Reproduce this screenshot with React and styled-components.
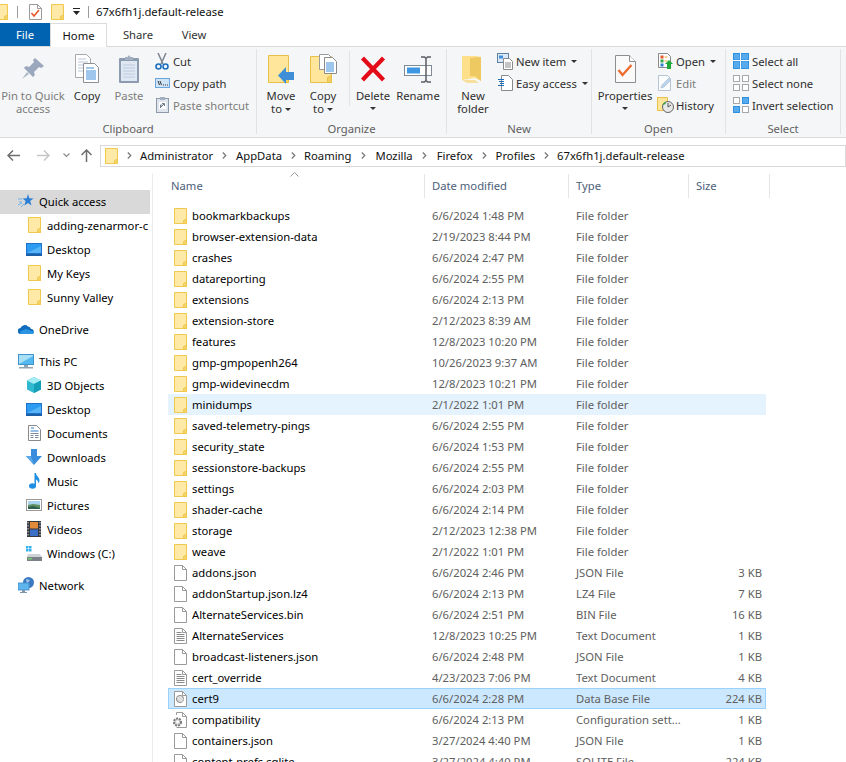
import React from "react";
import styled, { createGlobalStyle } from "styled-components";

const Global = createGlobalStyle`
  html, body { margin: 0; padding: 0; height: 100%; background: #fff; overflow: hidden; }
  body { font-family: "Noto Sans", "Open Sans", sans-serif; font-size: 11.25px; color: #1a1a1a; }
  * { box-sizing: border-box; }
  svg { display: block; flex: none; }
`;

const Page = styled.div`
  width: 846px; height: 762px; display: flex; flex-direction: column; overflow: hidden; background: #fff;
`;

/* ---------- title bar ---------- */
const TitleBar = styled.div`
  height: 23px; display: flex; align-items: center; flex: none; overflow: hidden;
`;
const TitleSep = styled.span`
  width: 1px; height: 12px; background: #9a9a9a; flex: none; margin: ${p => p.$m};
`;
const TitleText = styled.span`
  color: #111; margin-left: 7px; white-space: nowrap;
`;
const Clip = styled.span`
  display: block; flex: none; margin: ${p => p.$m || 0};
`;

/* ---------- tabs ---------- */
const TabBar = styled.div`
  height: 24px; flex: none; display: flex; border-bottom: 1px solid #dadbdc;
`;
const FileTab = styled.div`
  width: 50px; height: 23px; background: #0063b1; color: #fff; display: flex; align-items: center; justify-content: center;
`;
const Tab = styled.div`
  width: ${p => p.$w}px; height: ${p => (p.$active ? 24 : 23)}px; display: flex; align-items: center; justify-content: center;
  padding-bottom: 1px; color: ${p => (p.$active ? "#111" : "#333")};
  background: #fff; position: relative; z-index: 1;
  ${p => p.$active && "border: 1px solid #dadbdc; border-bottom: 0;"}
`;

/* ---------- ribbon ---------- */
const Ribbon = styled.div`
  height: 91px; flex: none; display: flex; background: #f5f6f7; border-bottom: 1px solid #dadbdc; padding-top: 2px;
`;
const Group = styled.div`
  width: ${p => p.$w}px; flex: none; height: 85px; display: flex; flex-direction: column;
  border-right: 1px solid #e2e3e4;
`;
const GroupBody = styled.div`
  flex: 1; display: flex; padding-left: ${p => p.$pl || 0}px; min-height: 0;
`;
const GroupLabel = styled.div`
  height: 15px; margin-bottom: -3px; line-height: 13px; text-align: center; color: #5f5f5f; flex: none;
`;
const Large = styled.div`
  width: ${p => p.$w}px; flex: none; display: flex; flex-direction: column; align-items: center; white-space: nowrap;
  color: ${p => (p.$off ? "#7c7c7c" : "#2f2f2f")};
`;
const LargeIcon = styled.div`
  height: 40px; display: flex; align-items: center; justify-content: center;
`;
const LargeText = styled.div`
  line-height: 13px; text-align: center;
`;
const Caret = styled.span`
  display: ${p => (p.$inline ? "inline-block" : "block")}; width: 0; height: 0;
  border-left: 3px solid transparent; border-right: 3px solid transparent; border-top: 3px solid #333;
  margin: ${p => p.$m || "5px auto 0"}; vertical-align: middle;
`;
const InnerSep = styled.div`
  width: 1px; height: 55px; background: #e2e3e4; flex: none; margin: 2px 0 0 5px;
`;
const Stack = styled.div`
  display: flex; flex-direction: column; padding-top: 1px; margin-left: ${p => p.$ml || 0}px;
`;
const Small = styled.div`
  height: 22px; display: flex; align-items: center; gap: 3px; white-space: nowrap;
  color: ${p => (p.$off ? "#7c7c7c" : "#2f2f2f")};
`;
const SmallIcon = styled.span`
  width: 16px; display: flex; justify-content: center; flex: none;
`;

/* ---------- address row ---------- */
const NavRow = styled.div`
  height: 34px; flex: none; display: flex; align-items: center; padding: 1px 0 0 7px;
`;
const NavButtons = styled.div`
  width: 93px; flex: none; display: flex; align-items: center;
`;
const AddressBox = styled.div`
  flex: 1; height: 22px; border: 1px solid #d9d9d9; display: flex; align-items: center; padding-left: 4px; color: #111; white-space: nowrap;
`;
const Crumb = styled.span`
  display: flex; align-items: center;
`;
const CrumbChevron = styled.span`
  width: ${p => p.$w}px; display: flex; justify-content: center; flex: none;
`;

/* ---------- main ---------- */
const Main = styled.div`
  flex: 1; min-height: 0; display: flex; overflow: hidden;
`;
const Sidebar = styled.nav`
  width: 153px; flex: none; border-right: 1px solid #ececec; padding-top: 17px; margin-top: 1px;
`;
const NavItem = styled.div`
  width: 150px; height: 24px; display: flex; align-items: center; white-space: nowrap; overflow: hidden;
  padding: 0 0 2px ${p => (p.$top ? 18 : 26)}px; margin-top: ${p => p.$gap || 0}px; color: #000;
  background: ${p => (p.$active ? "#d9d9d9" : "transparent")};
`;
const NavIcon = styled.span`
  width: 16px; flex: none; display: flex; justify-content: center; margin-right: 5px;
`;

const Content = styled.section`
  flex: 1; min-width: 0; padding-left: 15px; display: flex; flex-direction: column;
`;
const Columns = `display: grid; grid-template-columns: 257px 144px 120px 77px; width: 598px;`;
const Header = styled.div`
  ${Columns} height: 24px; flex: none; align-items: stretch; color: #4c607a; position: relative; margin-top: 2px; width: 602px; grid-template-columns: 257px 144px 120px 81px;
`;
const HeadCell = styled.div`
  padding: 0 0 1px ${p => p.$first ? 3 : 7}px; display: flex; align-items: center; border-right: 1px solid #e5e5e5;
`;
const SortArrow = styled.svg`
  position: absolute; left: 122px; top: -2px;
`;
const Rows = styled.div`
  margin-top: 7px;
`;
const Row = styled.div`
  ${Columns} height: 21px; align-items: center; white-space: nowrap;
  ${p => p.$selected && "background: #cce8ff; box-shadow: inset 0 0 0 1px #99d1ff;"}
  ${p => p.$hover && "background: #e5f3ff;"}
`;
const NameCell = styled.div`
  display: flex; align-items: center; color: #000; padding-left: ${p => p.$pl ?? 6}px; gap: 5px;
`;
const MetaCell = styled.div`
  padding-left: 7px; color: #606060; overflow: hidden;
`;
const SizeCell = styled.div`
  padding-right: 4px; color: #606060; text-align: right;
`;

/* ---------- icons ---------- */
const Folder = () => (
  <svg width="13" height="16" viewBox="0 0 13 16">
    <path d="M.5.5h12v15H.5z" fill="#ffe9a6" stroke="#eec84f" />
    <path d="M9.500 15.500v-3l3-1.500v4.500z" fill="#f6d365" stroke="#eec84f" />
  </svg>
);
const Page16 = ({ children }) => (
  <svg width="13" height="16" viewBox="0 0 13 16">
    <path d="M.5.5h8l4 4v11H.5z" fill="#fff" stroke="#9a9a9a" />
    <path d="M8.500.5v4h4" fill="none" stroke="#9a9a9a" />
    {children}
  </svg>
);
const TextPage = () => (
  <Page16>
    <path d="M2.500 4.500h5M2.500 6.500h8M2.500 8.500h8M2.500 10.500h8M2.500 12.500h8" stroke="#8a8a8a" />
  </Page16>
);
const DbPage = () => (
  <Page16>
    <circle cx="6" cy="8" r="3.600" fill="#d8d8d8" stroke="#8d8d8d" />
    <path d="M3.500 6l5 5M5.500 4.800l4 4" stroke="#f4f4f4" />
  </Page16>
);
const ConfigPage = () => (
  <svg width="15" height="16" viewBox="0 0 15 16">
    <path d="M4.500 3V.5h6l4 4v11h-10" fill="#fff" stroke="#9a9a9a" />
    <path d="M10.500.5v4h4" fill="none" stroke="#9a9a9a" />
    <circle cx="5.500" cy="10" r="3.600" fill="#cfcfcf" stroke="#7d7d7d" strokeDasharray="2 1" strokeWidth="2" />
    <circle cx="5.500" cy="10" r="1.400" fill="#fff" />
  </svg>
);

const Pin = () => (
  <svg width="24" height="24" viewBox="0 0 24 24">
    <path d="M14 1l9 8-3 2-2-1-5 5c1 2 1 4-1 5L3 11c1-2 3-2 5-1l5-5-1-2z" fill="#9aa7bd" />
    <path d="M6 15l-5 7 7-5z" fill="#aeb8c9" />
  </svg>
);
const CopyBig = () => (
  <svg width="26" height="30" viewBox="0 0 26 30">
    <path d="M1.500.5h11l4 4v19h-15z" fill="#fff" stroke="#a9a9a9" />
    <path d="M4 5h8M4 8h10M4 11h10M4 14h10M4 17h10" stroke="#b9c7da" />
    <path d="M9.500 9.500h11l4 4v15h-15z" fill="#fff" stroke="#8f8f8f" />
    <path d="M12 14h8M12 17h10M12 19h10M12 21h10M12 23h10M12 25h10" stroke="#3f8fdc" />
  </svg>
);
const PasteBig = () => (
  <svg width="22" height="29" viewBox="0 0 22 29">
    <rect x="1" y="3" width="20" height="25" rx="1" fill="#8c9bb0" />
    <rect x="3" y="6" width="16" height="20" fill="#dfe7f3" />
    <path d="M5 10h12M5 13h12M5 16h12M5 19h12M5 22h12" stroke="#bccadf" />
    <path d="M7 5V2h2.500l1-1.500h1l1 1.500H15v3z" fill="#a3aebe" />
  </svg>
);
const Scissors = () => (
  <svg width="14" height="17" viewBox="0 0 14 17">
    <path d="M3 0l5 11M11 0L6 11" stroke="#7c8490" strokeWidth="1.500" />
    <circle cx="3.500" cy="13.500" r="2.500" fill="none" stroke="#1c6fc0" strokeWidth="1.600" />
    <circle cx="10.500" cy="13.500" r="2.500" fill="none" stroke="#1c6fc0" strokeWidth="1.600" />
  </svg>
);
const CopyPath = () => (
  <svg width="15" height="10" viewBox="0 0 15 10">
    <rect x=".5" y=".5" width="14" height="9" fill="#cfe3f7" stroke="#6ba6dc" />
    <path d="M3 3l1.500 4M5 3l1.500 4" stroke="#333" />
    <path d="M8 7h1M10 7h1M12 7h1" stroke="#333" />
  </svg>
);
const PasteShort = () => (
  <svg width="13" height="16" viewBox="0 0 13 16">
    <rect x=".5" y="1.500" width="12" height="14" fill="#dfe5ec" stroke="#8d99a8" />
    <rect x="4" y="0" width="5" height="3" fill="#a3aebe" />
    <rect x="3" y="5" width="7" height="7" fill="#fff" />
    <path d="M4.500 11V8h2M5 10l3-3M6 6.500h2.500V9" stroke="#6d7a8a" fill="none" />
  </svg>
);
const MoveTo = () => (
  <svg width="26" height="29" viewBox="0 0 26 29">
    <path d="M.5.500h20v27H.5z" fill="#ffe69a" stroke="#e6c049" />
    <path d="M16.500 27.500v-5l4-2v7z" fill="#f4cf62" stroke="#e6c049" />
    <path d="M10 20.500L18 12v5h8v8h-8v4z" fill="#3f8fd8" />
  </svg>
);
const CopyTo = () => (
  <svg width="27" height="30" viewBox="0 0 27 30">
    <path d="M.5 2.500h21v26H.5z" fill="#ffe69a" stroke="#e6c049" />
    <path d="M17.500 28.500v-5l4-2v7z" fill="#f4cf62" stroke="#e6c049" />
    <path d="M9.500.5h9l3 3v12h-12z" fill="#fff" stroke="#9a9a9a" />
    <path d="M14.500 3.500h8l4 4v12h-12z" fill="#fff" stroke="#8a8a8a" />
    <path d="M16 9h8M16 11h8M16 13h8M16 15h8M16 17h8" stroke="#3f8fdc" />
  </svg>
);
const Cross = () => (
  <svg width="26" height="26" viewBox="0 0 26 26">
    <path d="M2.500 2L23.500 24M23.500 2L2.500 24" fill="none" stroke="#e30b17" strokeWidth="4.200" />
  </svg>
);
const Rename = () => (
  <svg width="28" height="27" viewBox="0 0 28 27">
    <rect x=".5" y="9.500" width="27" height="10" fill="#fff" stroke="#7f8a96" />
    <rect x="3" y="11.500" width="13" height="6" fill="#3f96e3" />
    <path d="M17 1h3.500L22 2.500 23.500 1H27M22 2.500v22M17 26h3.500l1.500-1.500 1.500 1.500H27" stroke="#5a5f66" strokeWidth="1.500" fill="none" />
  </svg>
);
const NewFolderBig = () => (
  <svg width="24" height="28" viewBox="0 0 24 28">
    <path d="M1 1h14l5 1v24l-6-3-13 2z" fill="#ffe08a" />
    <path d="M9 3l11-1v24l-6-5H9z" fill="#eec860" />
    <path d="M1 25L9 3v18z" fill="#ffe08a" opacity=".7" />
    <path d="M1 25h13l4 3H6z" fill="#f8d676" opacity=".7" />
  </svg>
);
const NewItem = () => (
  <svg width="17" height="17" viewBox="0 0 17 17">
    <rect x=".5" y=".5" width="11" height="9" fill="#dbe9f7" stroke="#5f7f9f" />
    <rect x="2" y="2.500" width="4" height="3" fill="#3f8fdc" />
    <path d="M6.500 5.500h6l3 3v8h-9z" fill="#fff" stroke="#8a8a8a" />
    <path d="M8 10h6M8 12h6M8 14h6" stroke="#8a8a8a" />
  </svg>
);
const EasyAccess = () => (
  <svg width="15" height="16" viewBox="0 0 15 16">
    <path d="M3.500.5h7l4 4v11h-11z" fill="#fff" stroke="#8a8a8a" />
    <path d="M0 6.500h6M1 8.500h5M2 10.500h4M0 12.500h6" stroke="#1d6fbe" transform="translate(0 -2)" />
  </svg>
);
const PropsBig = () => (
  <svg width="21" height="28" viewBox="0 0 21 28">
    <path d="M.5.500h14l6 6v21H.5z" fill="#fafafa" stroke="#8e8e8e" />
    <path d="M14.500.500v6h6" fill="#fff" stroke="#8e8e8e" />
    <path d="M3.500 15l4 5 9-10" fill="none" stroke="#ee6a2c" strokeWidth="2.300" />
  </svg>
);
const OpenIcon = () => (
  <svg width="15" height="16" viewBox="0 0 15 16">
    <path d="M.5.500h9l3 3v11H.5z" fill="#fff" stroke="#8a8a8a" />
    <rect x="2.500" y="2.500" width="3" height="3" fill="#e8552d" />
    <rect x="2.500" y="6.500" width="3" height="3" fill="#35a84a" />
    <rect x="2.500" y="10.500" width="3" height="3" fill="#2f7fd0" />
    <path d="M6.500 4h3M6.500 8h3" stroke="#f2a23a" />
    <path d="M11 7l4 4h-2v5h-4v-5H7z" fill="#20a93a" />
  </svg>
);
const EditIcon = () => (
  <svg width="14" height="16" viewBox="0 0 14 16">
    <path d="M.5.500h9l3 3v12H.5z" fill="#fbfcfe" stroke="#b8c4d4" />
    <path d="M3 13l1-3 7-7 2 2-7 7z" fill="#bcd4ee" stroke="#9fb6d0" strokeWidth=".6" />
  </svg>
);
const HistoryIcon = () => (
  <svg width="17" height="16" viewBox="0 0 17 16">
    <path d="M.5.500h10v13H.5z" fill="#ffe69a" stroke="#e6c049" />
    <circle cx="11" cy="10" r="5.500" fill="#e8e8e8" stroke="#666" />
    <path d="M11 6v4l3-2" fill="none" stroke="#555" />
    <path d="M5 11a6 6 0 0 1 3-6l1 2-4 1z" fill="#3aa646" />
  </svg>
);
const Squares = ({ fills, stroke }) => {
  const spots = [[0, 0], [9, 0], [0, 9], [9, 9]];
  return (
    <svg width="16" height="16" viewBox="0 0 16 16">
      {spots.map(([x, y], i) => (
        <rect key={i} x={x + 0.5} y={y + 0.5} width="6" height="6" fill={fills[i]} stroke={stroke[i]} />
      ))}
    </svg>
  );
};
const SelectAll = () => (
  <svg width="16" height="16" viewBox="0 0 16 16">
    <rect width="16" height="16" fill="#2f8fe0" />
    <path d="M7.500 0v16M0 7.500h16" stroke="#fff" />
    <rect x="1" y="1" width="5.500" height="5.500" fill="#57aaec" />
    <rect x="8.500" y="1" width="6.500" height="5.500" fill="#57aaec" />
    <rect x="1" y="8.500" width="5.500" height="6.500" fill="#57aaec" />
    <rect x="8.500" y="8.500" width="6.500" height="6.500" fill="#57aaec" />
  </svg>
);

const Back = styled.svg`
  ${p => p.$flip && "transform: scaleX(-1);"}
`;
const BackArrow = ({ color = "#6e6e6e", flip }) => (
  <Back $flip={flip} width="13" height="11" viewBox="0 0 13 11">
    <path d="M6 .5L1 5.500l5 5M1 5.500h12" fill="none" stroke={color} strokeWidth="1.500" />
  </Back>
);
const Up = () => (
  <svg width="11" height="13" viewBox="0 0 11 13">
    <path d="M.5 6l5-5 5 5M5.500 1v12" fill="none" stroke="#6e6e6e" strokeWidth="1.500" />
  </svg>
);
const Chev = () => (
  <svg width="7" height="5" viewBox="0 0 7 5">
    <path d="M.5.500l3 3 3-3" fill="none" stroke="#8a8a8a" strokeWidth="1.200" />
  </svg>
);
const ChevR = () => (
  <svg width="5" height="7" viewBox="0 0 5 7">
    <path d="M.8.500l3 3-3 3" fill="none" stroke="#777" strokeWidth="1.200" />
  </svg>
);

const Star = () => (
  <svg width="16" height="16" viewBox="0 0 16 16">
    <path d="M10 1l1.300 4.200 4.300.2-3.400 2.700 1.200 4.300L10 10l-3.700 2.400 1.300-4.300L4.500 5.400l4.200-.2z" fill="#2b7fd4" />
    <path d="M0 6h4M1 9h3M0 12l4-2M3 14l3-3" stroke="#6fb2ea" />
  </svg>
);
const DesktopIco = () => (
  <svg width="16" height="13" viewBox="0 0 16 13">
    <rect width="16" height="12" fill="#1f72c9" />
    <rect x="1" y="1" width="14" height="9" fill="#2d9bf0" />
    <path d="M1 10L15 3v7z" fill="#56b4f7" />
    <rect x="0" y="11" width="16" height="2" fill="#1a5fa8" />
  </svg>
);
const Cloud = () => (
  <svg width="16" height="10" viewBox="0 0 16 10">
    <path d="M3 10a3 3 0 0 1-.5-6A4.500 4.500 0 0 1 10 2.500 3.500 3.500 0 0 1 13 5a2.500 2.500 0 0 1 .5 5z" fill="#0f6cbd" />
    <path d="M3 10a2 2 0 0 1 0-3l5-2 8 3a2 2 0 0 1-2.500 2z" fill="#2b95e4" />
  </svg>
);
const PC = () => (
  <svg width="16" height="15" viewBox="0 0 16 15">
    <rect x=".5" y=".5" width="15" height="10" fill="#a9e0f8" stroke="#3d93cc" />
    <path d="M1 10L15 2v8z" fill="#53b9ee" />
    <rect x="6" y="11" width="4" height="2" fill="#8fa6b5" />
    <rect x="1" y="13" width="14" height="1.500" fill="#8fa6b5" />
  </svg>
);
const Cube = () => (
  <svg width="16" height="16" viewBox="0 0 16 16">
    <path d="M8 0l7 3.500v9L8 16l-7-3.500v-9z" fill="#2fb8cf" />
    <path d="M8 0l7 3.500L8 7 1 3.500z" fill="#a5edf5" />
    <path d="M8 7v9l7-3.500v-9z" fill="#149eb8" />
  </svg>
);
const DocsIco = () => (
  <svg width="13" height="16" viewBox="0 0 13 16">
    <path d="M.5.500h8l4 4v11H.5z" fill="#fff" stroke="#8a8a8a" />
    <path d="M3 3h3M2.500 6h8" stroke="#2f7fd0" />
    <path d="M2.500 8.500h8M2.500 10.500h3M7 10.500h3.500M2.500 12.500h3M7 12.500h3.500" stroke="#7d8b99" />
  </svg>
);
const DownIco = () => (
  <svg width="16" height="16" viewBox="0 0 16 16">
    <path d="M5 0h6v7h5l-8 9-8-9h5z" fill="#3a8ddc" />
    <path d="M8 16L0 7h5z" fill="#5aa7ea" />
  </svg>
);
const MusicIco = () => (
  <svg width="11" height="16" viewBox="0 0 11 16">
    <ellipse cx="3.500" cy="13" rx="3.500" ry="2.800" fill="#1e8fe3" />
    <path d="M5.500 13V0h1.500c0 3 3.500 4 3.500 7.500 0 1-.3 2-1 3 .2-2-1.500-3.500-2.500-4V13z" fill="#1e8fe3" />
  </svg>
);
const PicIco = () => (
  <svg width="16" height="12" viewBox="0 0 16 12">
    <rect x=".5" y=".5" width="15" height="11" fill="#fff" stroke="#9a9a9a" />
    <rect x="2" y="2" width="12" height="4" fill="#a9d3ef" />
    <path d="M2 6l5-1 7 1v4H2z" fill="#5f8f5f" />
    <path d="M2 8l5-1 7 2v1H2z" fill="#2f5f4f" />
  </svg>
);
const FilmIco = () => (
  <svg width="14" height="16" viewBox="0 0 14 16">
    <rect width="14" height="16" fill="#35393f" />
    <rect x="3" y="1" width="8" height="6.500" fill="#e08a3a" />
    <rect x="3" y="8.500" width="8" height="6.500" fill="#3a6fc8" />
    <path d="M1 1v14M13 1v14" stroke="#cfd3d8" strokeDasharray="1.500 1.500" />
  </svg>
);
const DriveIco = () => (
  <svg width="16" height="15" viewBox="0 0 16 15">
    <rect x="0" y="0" width="2.500" height="2.500" fill="#35b0f0" />
    <rect x="3" y="0" width="2.500" height="2.500" fill="#35b0f0" />
    <rect x="0" y="3" width="2.500" height="2.500" fill="#35b0f0" />
    <rect x="3" y="3" width="2.500" height="2.500" fill="#35b0f0" />
    <path d="M2 8h12l2 3H1z" fill="#cfd3d6" />
    <rect x="1" y="11" width="15" height="4" fill="#7b8186" />
    <rect x="2" y="12" width="4" height="1.500" fill="#6fd06f" />
  </svg>
);
const NetIco = () => (
  <svg width="16" height="16" viewBox="0 0 16 16">
    <circle cx="10.500" cy="5.500" r="5.500" fill="#3b79c2" />
    <path d="M8 2l4 1-2 3 2 3-3-1z" fill="#9ac4ea" />
    <rect x="0" y="6" width="11" height="7" fill="#5fb6ee" stroke="#3c87c4" strokeWidth=".8" />
    <rect x="4" y="13" width="3" height="2" fill="#7f97a8" />
    <rect x="2" y="15" width="7" height="1" fill="#7f97a8" />
  </svg>
);

/* ---------- data ---------- */
const FF = "File folder";
const rows = [
  ["bookmarkbackups", "6/6/2024 1:48 PM", FF, ""],
  ["browser-extension-data", "2/19/2023 8:44 PM", FF, ""],
  ["crashes", "6/6/2024 2:47 PM", FF, ""],
  ["datareporting", "6/6/2024 2:55 PM", FF, ""],
  ["extensions", "6/6/2024 2:13 PM", FF, ""],
  ["extension-store", "2/12/2023 8:39 AM", FF, ""],
  ["features", "12/8/2023 10:20 PM", FF, ""],
  ["gmp-gmpopenh264", "10/26/2023 9:37 AM", FF, ""],
  ["gmp-widevinecdm", "12/8/2023 10:21 PM", FF, ""],
  ["minidumps", "2/1/2022 1:01 PM", FF, "", "hover"],
  ["saved-telemetry-pings", "6/6/2024 2:55 PM", FF, ""],
  ["security_state", "6/6/2024 1:53 PM", FF, ""],
  ["sessionstore-backups", "6/6/2024 2:55 PM", FF, ""],
  ["settings", "6/6/2024 2:03 PM", FF, ""],
  ["shader-cache", "6/6/2024 2:14 PM", FF, ""],
  ["storage", "2/12/2023 12:38 PM", FF, ""],
  ["weave", "2/1/2022 1:01 PM", FF, ""],
  ["addons.json", "6/6/2024 2:46 PM", "JSON File", "3 KB", "page"],
  ["addonStartup.json.lz4", "6/6/2024 2:13 PM", "LZ4 File", "7 KB", "page"],
  ["AlternateServices.bin", "6/6/2024 2:51 PM", "BIN File", "16 KB", "page"],
  ["AlternateServices", "12/8/2023 10:25 PM", "Text Document", "1 KB", "text"],
  ["broadcast-listeners.json", "6/6/2024 2:48 PM", "JSON File", "1 KB", "page"],
  ["cert_override", "4/23/2023 7:06 PM", "Text Document", "4 KB", "text"],
  ["cert9", "6/6/2024 2:28 PM", "Data Base File", "224 KB", "db"],
  ["compatibility", "6/6/2024 2:13 PM", "Configuration sett...", "1 KB", "config"],
  ["containers.json", "3/27/2024 4:40 PM", "JSON File", "1 KB", "page"],
  ["content-prefs.sqlite", "3/27/2024 4:40 PM", "SQLITE File", "224 KB", "page"],
];

const FileIcon = ({ kind }) => {
  if (kind === "page") return <Page16 />;
  if (kind === "text") return <TextPage />;
  if (kind === "db") return <DbPage />;
  if (kind === "config") return <ConfigPage />;
  return <Folder />;
};

const nav = [
  { t: "Quick access", i: <Star />, top: 1, active: 1 },
  { t: "adding-zenarmor-c", i: <Folder /> },
  { t: "Desktop", i: <DesktopIco /> },
  { t: "My Keys", i: <Folder /> },
  { t: "Sunny Valley", i: <Folder /> },
  { t: "OneDrive", i: <Cloud />, top: 1, gap: 8 },
  { t: "This PC", i: <PC />, top: 1, gap: 8 },
  { t: "3D Objects", i: <Cube /> },
  { t: "Desktop", i: <DesktopIco /> },
  { t: "Documents", i: <DocsIco /> },
  { t: "Downloads", i: <DownIco /> },
  { t: "Music", i: <MusicIco /> },
  { t: "Pictures", i: <PicIco /> },
  { t: "Videos", i: <FilmIco /> },
  { t: "Windows (C:)", i: <DriveIco /> },
  { t: "Network", i: <NetIco />, top: 1, gap: 8 },
];

const crumbs = [
  ["Administrator", 23], ["AppData", 22], ["Roaming", 24], ["Mozilla", 24], ["Firefox", 23], ["Profiles", 22], ["67x6fh1j.default-release", 0],
];

export default function App() {
  return (
    <Page>
      <Global />
      <TitleBar>
        <Clip $m="0 0 0 -5px"><Folder /></Clip>
        <TitleSep $m="0 0 0 9px" />
        <Clip $m="0 0 0 11px">
          <Page16><path d="M2.500 9l2.500 3 5-6" fill="none" stroke="#e8562a" strokeWidth="1.600" /></Page16>
        </Clip>
        <Clip $m="0 0 0 9px"><Folder /></Clip>
        <Clip $m="0 0 0 9px">
          <svg width="7" height="7" viewBox="0 0 7 7"><path d="M0 0h7v1H0zM0 3h7L3.500 7z" fill="#222" /></svg>
        </Clip>
        <TitleSep $m="0 0 0 8px" />
        <TitleText>67x6fh1j.default-release</TitleText>
      </TitleBar>

      <TabBar>
        <FileTab>File</FileTab>
        <Tab $w={57} $active>Home</Tab>
        <Tab $w={62}>Share</Tab>
        <Tab $w={50}>View</Tab>
      </TabBar>

      <Ribbon>
        <Group $w={257}>
          <GroupBody>
            <Large $w={66} $off>
              <LargeIcon><Pin /></LargeIcon>
              <LargeText>Pin to Quick<br />access</LargeText>
            </Large>
            <Large $w={42}>
              <LargeIcon><CopyBig /></LargeIcon>
              <LargeText>Copy</LargeText>
            </Large>
            <Large $w={42} $off>
              <LargeIcon><PasteBig /></LargeIcon>
              <LargeText>Paste</LargeText>
            </Large>
            <Stack $ml={4}>
              <Small><SmallIcon><Scissors /></SmallIcon>Cut</Small>
              <Small><SmallIcon><CopyPath /></SmallIcon>Copy path</Small>
              <Small $off><SmallIcon><PasteShort /></SmallIcon>Paste shortcut</Small>
            </Stack>
          </GroupBody>
          <GroupLabel>Clipboard</GroupLabel>
        </Group>

        <Group $w={190}>
          <GroupBody $pl={3}>
            <Large $w={42}>
              <LargeIcon><MoveTo /></LargeIcon>
              <LargeText>Move<br />to <Caret $inline $m="0" /></LargeText>
            </Large>
            <Large $w={42}>
              <LargeIcon><CopyTo /></LargeIcon>
              <LargeText>Copy<br />to <Caret $inline $m="0" /></LargeText>
            </Large>
            <InnerSep />
            <Large $w={46}>
              <LargeIcon><Cross /></LargeIcon>
              <LargeText>Delete</LargeText>
              <Caret />
            </Large>
            <Large $w={44}>
              <LargeIcon><Rename /></LargeIcon>
              <LargeText>Rename</LargeText>
            </Large>
          </GroupBody>
          <GroupLabel>Organize</GroupLabel>
        </Group>

        <Group $w={145}>
          <GroupBody $pl={6}>
            <Large $w={40}>
              <LargeIcon><NewFolderBig /></LargeIcon>
              <LargeText>New<br />folder</LargeText>
            </Large>
            <Stack $ml={4}>
              <Small><SmallIcon><NewItem /></SmallIcon>New item <Caret $inline $m="0 0 0 2px" /></Small>
              <Small><SmallIcon><EasyAccess /></SmallIcon>Easy access <Caret $inline $m="0 0 0 2px" /></Small>
            </Stack>
          </GroupBody>
          <GroupLabel>New</GroupLabel>
        </Group>

        <Group $w={134}>
          <GroupBody $pl={5}>
            <Large $w={56}>
              <LargeIcon><PropsBig /></LargeIcon>
              <LargeText>Properties</LargeText>
              <Caret />
            </Large>
            <Stack $ml={4}>
              <Small><SmallIcon><OpenIcon /></SmallIcon>Open <Caret $inline $m="0 0 0 2px" /></Small>
              <Small $off><SmallIcon><EditIcon /></SmallIcon>Edit</Small>
              <Small><SmallIcon><HistoryIcon /></SmallIcon>History</Small>
            </Stack>
          </GroupBody>
          <GroupLabel>Open</GroupLabel>
        </Group>

        <Group $w={115}>
          <GroupBody $pl={7}>
            <Stack>
              <Small><SmallIcon><SelectAll /></SmallIcon>Select all</Small>
              <Small><SmallIcon><Squares fills={["#fff", "#fff", "#fff", "#fff"]} stroke={["#a8a8a8", "#a8a8a8", "#a8a8a8", "#a8a8a8"]} /></SmallIcon>Select none</Small>
              <Small><SmallIcon><Squares fills={["#fff", "#57aaec", "#57aaec", "#fff"]} stroke={["#a8a8a8", "#2f8fe0", "#2f8fe0", "#a8a8a8"]} /></SmallIcon>Invert selection</Small>
            </Stack>
          </GroupBody>
          <GroupLabel>Select</GroupLabel>
        </Group>
      </Ribbon>

      <NavRow>
        <NavButtons>
          <BackArrow />
          <Clip $m="0 0 0 17px"><BackArrow color="#c6c6c6" flip /></Clip>
          <Clip $m="0 0 0 13px"><Chev /></Clip>
          <Clip $m="0 0 0 11px"><Up /></Clip>
        </NavButtons>
        <AddressBox>
          <Folder />
          <CrumbChevron $w={22}><ChevR /></CrumbChevron>
          {crumbs.map(([c, w]) => (
            <Crumb key={c}>
              {c}
              {w > 0 && <CrumbChevron $w={w}><ChevR /></CrumbChevron>}
            </Crumb>
          ))}
        </AddressBox>
      </NavRow>

      <Main>
        <Sidebar>
          {nav.map((n, i) => (
            <NavItem key={i} $top={n.top} $gap={n.gap} $active={n.active}>
              <NavIcon>{n.i}</NavIcon>
              {n.t}
            </NavItem>
          ))}
        </Sidebar>
        <Content>
          <Header>
            <HeadCell $first>Name</HeadCell>
            <HeadCell>Date modified</HeadCell>
            <HeadCell>Type</HeadCell>
            <HeadCell>Size</HeadCell>
            <SortArrow width="9" height="5" viewBox="0 0 9 5">
              <path d="M.5 4.500l4-4 4 4" fill="none" stroke="#9a9a9a" />
            </SortArrow>
          </Header>
          <Rows>
            {rows.map(([n, d, t, s, k]) => (
              <Row key={n} $hover={k === "hover"} $selected={k === "db"}>
                <NameCell $pl={k === "config" ? 4 : 6}>
                  <FileIcon kind={k === "hover" ? undefined : k} />
                  {n}
                </NameCell>
                <MetaCell>{d}</MetaCell>
                <MetaCell>{t}</MetaCell>
                <SizeCell>{s}</SizeCell>
              </Row>
            ))}
          </Rows>
        </Content>
      </Main>
    </Page>
  );
}
